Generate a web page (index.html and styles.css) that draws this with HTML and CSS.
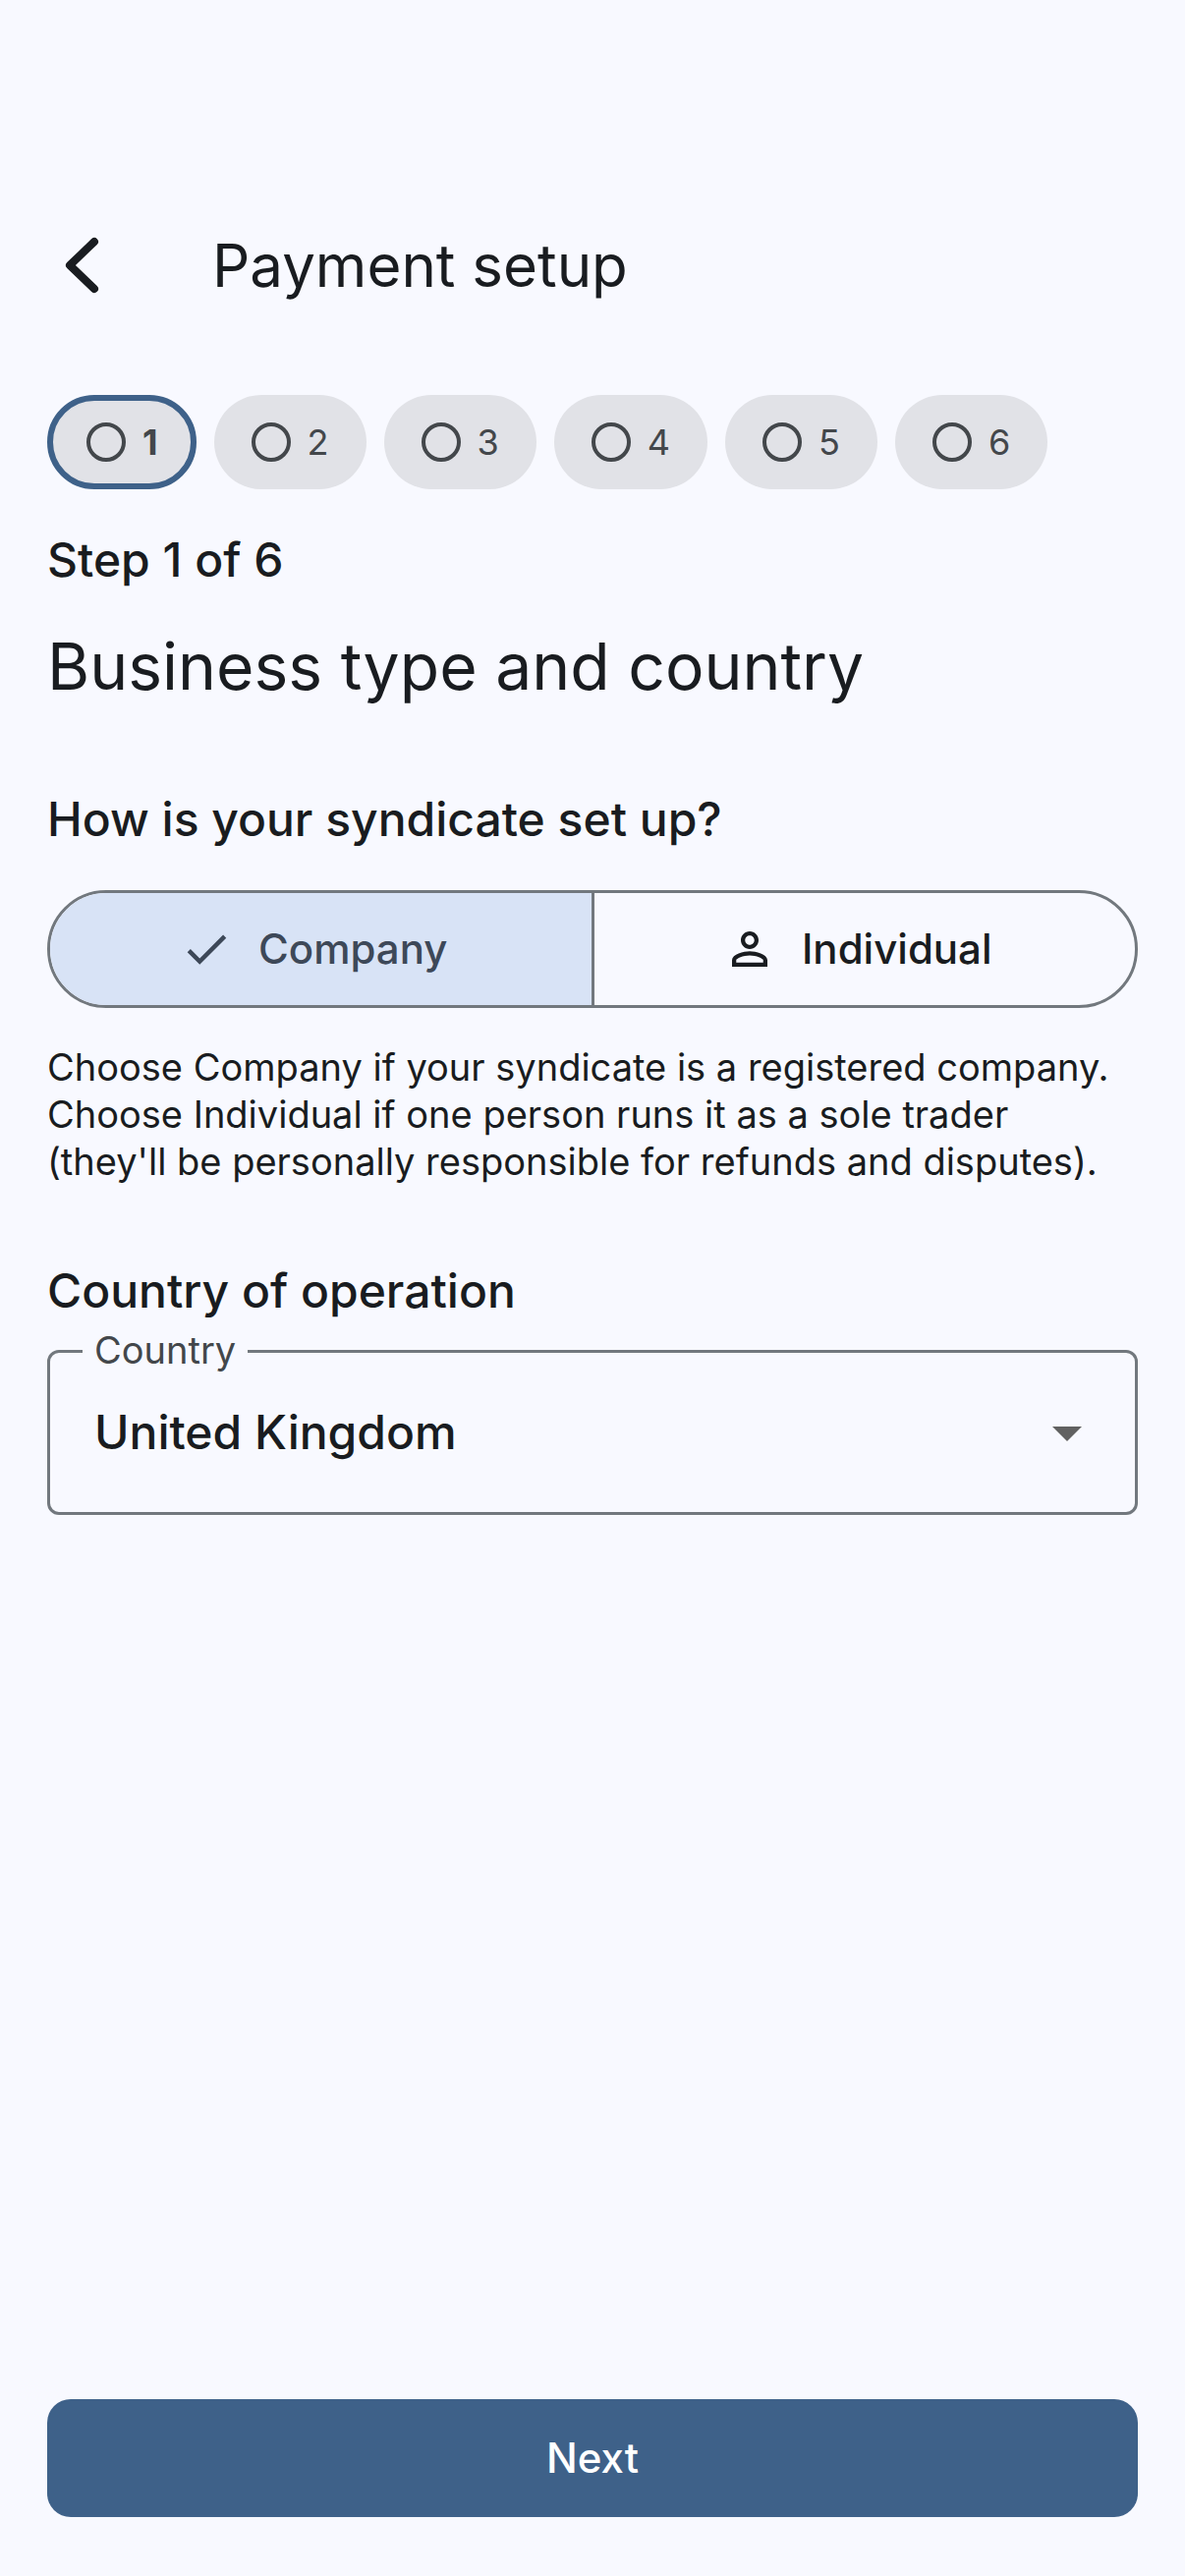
FILE: index.html
```
<!DOCTYPE html>
<html lang="en">
<head>
  <meta charset="utf-8">
  <meta name="viewport" content="width=device-width, initial-scale=1">
  <title>Payment setup</title>
  <link rel="stylesheet" href="styles.css">
</head>
<body>
  <div class="page">
    <header class="app-bar">
      <button class="back" type="button" aria-label="Back">
        <svg class="back-icon" viewBox="0 0 72 72" aria-hidden="true"><path d="M48 12 23 36l25 24"/></svg>
      </button>
      <h1 class="title">Payment setup</h1>
    </header>

    <form class="content">
      <ol class="steps">
        <li><button type="button" class="chip chip-current" aria-current="step"><span class="dot"></span>1</button></li>
        <li><button type="button" class="chip"><span class="dot"></span>2</button></li>
        <li><button type="button" class="chip"><span class="dot"></span>3</button></li>
        <li><button type="button" class="chip"><span class="dot"></span>4</button></li>
        <li><button type="button" class="chip"><span class="dot"></span>5</button></li>
        <li><button type="button" class="chip"><span class="dot"></span>6</button></li>
      </ol>

      <p class="subtitle progress">Step 1 of 6</p>
      <h2 class="heading">Business type and country</h2>

      <h3 class="subtitle" id="setup-title">How is your syndicate set up?</h3>
      <div class="segmented" role="radiogroup" aria-labelledby="setup-title">
        <label class="segment">
          <input class="segment-input" type="radio" name="type" value="company" checked>
          <svg class="segment-icon" viewBox="0 0 24 24" aria-hidden="true"><path d="M9 16.17 4.83 12l-1.42 1.41L9 19 21 7l-1.41-1.41z"/></svg>
          Company
        </label>
        <label class="segment">
          <input class="segment-input" type="radio" name="type" value="individual">
          <svg class="segment-icon" viewBox="0 0 24 24" aria-hidden="true"><path d="M12 5.9c1.16 0 2.1.94 2.1 2.1s-.94 2.1-2.1 2.1S9.9 9.16 9.9 8s.94-2.1 2.1-2.1m0 9c2.97 0 6.1 1.46 6.1 2.1v1.1H5.9V17c0-.64 3.13-2.1 6.1-2.1M12 4C9.79 4 8 5.79 8 8s1.79 4 4 4 4-1.79 4-4-1.79-4-4-4m0 9c-2.67 0-8 1.34-8 4v3h16v-3c0-2.66-5.33-4-8-4"/></svg>
          Individual
        </label>
      </div>
      <p class="helper">Choose Company if your syndicate is a registered company.<br>Choose Individual if one person runs it as a sole trader<br>(they'll be personally responsible for refunds and disputes).</p>

      <h3 class="subtitle">Country of operation</h3>
      <div class="field">
        <label class="field-label" for="country">Country</label>
        <select class="field-select" id="country" name="country">
          <option>United Kingdom</option>
          <option>Ireland</option>
        </select>
        <svg class="field-arrow" viewBox="0 0 30 15" aria-hidden="true"><path d="M0 0h30L15 15z"/></svg>
      </div>

      <button class="next" type="submit">Next</button>
    </form>
  </div>
</body>
</html>
```
FILE: styles.css
```
:root {
  --surface: #f8f9ff;
  --text: #191c20;
  --muted: #43474b;
  --outline: #72787e;
  --primary: #3e6189;
  --chip: #e1e2e7;
  --selected: #d8e3f6;
  --on-selected: #3d4858;
}

* {
  box-sizing: border-box;
}

body {
  margin: 0;
  background: var(--surface);
  color: var(--text);
  font-family: Inter, "Liberation Sans", sans-serif;
}

button,
select {
  margin: 0;
  border: 0;
  background: none;
  color: inherit;
  font: inherit;
}

.page {
  display: flex;
  flex-direction: column;
  min-height: 100vh;
  padding-top: 186px;
}

.app-bar {
  display: flex;
  align-items: center;
  gap: 48px;
  height: 168px;
}

.back {
  display: flex;
  align-items: center;
  justify-content: center;
  width: 168px;
  height: 168px;
  padding: 0;
}

.back-icon {
  width: 72px;
  height: 72px;
  fill: none;
  stroke: currentColor;
  stroke-width: 8;
  stroke-linecap: round;
  stroke-linejoin: round;
}

.title {
  margin: 0;
  font-size: 60px;
  font-weight: 400;
  line-height: 84px;
}

.content {
  display: flex;
  flex: 1;
  flex-direction: column;
  padding: 48px 48px 60px;
}

.steps {
  display: flex;
  gap: 18px;
  margin: 0;
  padding: 0;
  list-style: none;
}

.chip {
  display: flex;
  align-items: center;
  gap: 17px;
  height: 96px;
  padding: 0 38px;
  border-radius: 48px;
  background: var(--chip);
  color: var(--muted);
  font-size: 36px;
  line-height: 48px;
}

.chip-current {
  border: 6px solid var(--primary);
  padding: 0 33px 0 34px;
  font-weight: 700;
}

.dot {
  width: 40px;
  height: 40px;
  border: 4px solid currentColor;
  border-radius: 50%;
}

.subtitle {
  margin: 0;
  font-size: 48px;
  font-weight: 500;
  line-height: 72px;
}

.progress {
  margin-top: 36px;
}

.heading {
  margin: 24px 0 72px;
  font-size: 66px;
  font-weight: 400;
  line-height: 96px;
}

.segmented {
  display: flex;
  margin-top: 36px;
  height: 120px;
  border: 3px solid var(--outline);
  border-radius: 60px;
  overflow: hidden;
}

.segment {
  display: flex;
  flex: 1;
  align-items: center;
  justify-content: center;
  gap: 26px;
  padding-right: 14px;
  font-size: 42px;
  font-weight: 500;
  line-height: 60px;
}

.segment + .segment {
  border-left: 3px solid var(--outline);
}

.segment:has(:checked) {
  background: var(--selected);
  color: var(--on-selected);
}

.segment-input {
  position: absolute;
  margin: 0;
  appearance: none;
}

.segment-icon {
  width: 54px;
  height: 54px;
  fill: currentColor;
}

.helper {
  margin: 36px 0 72px;
  font-size: 38px;
  line-height: 48px;
}

.field {
  position: relative;
  margin-top: 24px;
}

.field-label {
  position: absolute;
  top: -24px;
  left: 36px;
  padding: 0 12px;
  background: var(--surface);
  color: var(--muted);
  font-size: 38px;
  line-height: 48px;
}

.field-select {
  width: 100%;
  height: 168px;
  padding: 0 45px;
  border: 3px solid var(--outline);
  border-radius: 12px;
  font-size: 48px;
  font-weight: 500;
  line-height: 72px;
  appearance: none;
}

.field-arrow {
  position: absolute;
  top: 78px;
  right: 57px;
  width: 30px;
  height: 15px;
  fill: #616161;
  pointer-events: none;
}

.next {
  height: 120px;
  margin-top: auto;
  border-radius: 24px;
  background: var(--primary);
  color: #fff;
  font-size: 42px;
  font-weight: 500;
  line-height: 60px;
}
```
